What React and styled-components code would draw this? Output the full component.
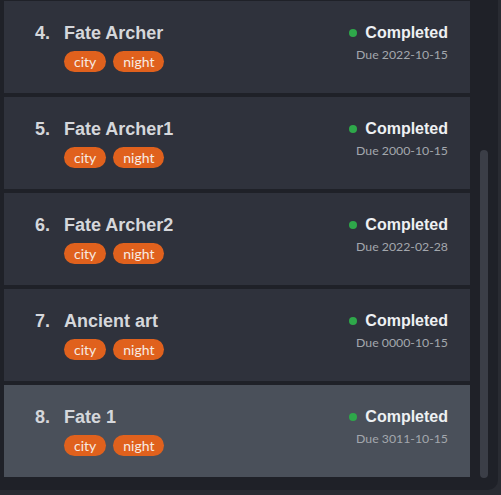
import React from "react";
import styled, { createGlobalStyle } from "styled-components";

const tasks = [
  { id: 4, title: "Fate Archer", tags: ["city", "night"], due: "2022-10-15" },
  { id: 5, title: "Fate Archer1", tags: ["city", "night"], due: "2000-10-15" },
  { id: 6, title: "Fate Archer2", tags: ["city", "night"], due: "2022-02-28" },
  { id: 7, title: "Ancient art", tags: ["city", "night"], due: "0000-10-15" },
  { id: 8, title: "Fate 1", tags: ["city", "night"], due: "3011-10-15", active: true },
];

const App = () => {
  return (
    <>
      <GlobalStyle />
      <Panel>
        <List>
          {tasks.map((t) => (
            <Card key={t.id} $active={t.active}>
              <Left>
                <TitleRow>
                  <Num>{t.id}.</Num>
                  <Title>{t.title}</Title>
                </TitleRow>
                <Tags>
                  {t.tags.map((tag) => (
                    <Tag key={tag}>{tag}</Tag>
                  ))}
                </Tags>
              </Left>
              <Right>
                <Status>
                  <Dot />
                  Completed
                </Status>
                <Due>Due {t.due}</Due>
              </Right>
            </Card>
          ))}
        </List>
        <Track>
          <Thumb />
        </Track>
      </Panel>
    </>
  );
};
export default App;

const GlobalStyle = createGlobalStyle`
  html, body {
    margin: 0;
    background: #292b32;
    height: 495px;
    overflow: hidden;
  }
`;

const Panel = styled.div`
  width: 498px;
  height: 490px;
  box-sizing: border-box;
  background: #1f2128;
  border-bottom-right-radius: 10px;
  display: flex;
  gap: 10px;
  padding: 1px 10px 13px 4px;
  font-family: "Liberation Sans", Arial, sans-serif;
`;

const List = styled.div`
  width: 466px;
  display: flex;
  flex-direction: column;
  gap: 4px;
`;

const Card = styled.div`
  height: 92px;
  box-sizing: border-box;
  background: ${(p) => (p.$active ? "#4a505a" : "#2f323c")};
  display: flex;
  justify-content: space-between;
  align-items: flex-start;
  padding: 21px 22px 0 31px;
`;

const Left = styled.div`
  display: flex;
  flex-direction: column;
`;

const TitleRow = styled.div`
  display: flex;
  line-height: 22px;
  font-size: 18px;
  font-weight: bold;
  color: #d5d7db;
  margin-bottom: 7px;
`;

const Num = styled.span`
  width: 29px;
`;

const Title = styled.span``;

const Tags = styled.div`
  display: flex;
  gap: 7px;
  padding-left: 29px;
`;

const Tag = styled.span`
  height: 21px;
  line-height: 21px;
  padding: 0 10px;
  border-radius: 11px;
  background: #e0611d;
  color: #f7ebe3;
  font-family: Lato, "Liberation Sans", sans-serif;
  font-size: 14px;
`;

const Right = styled.div`
  display: flex;
  flex-direction: column;
  align-items: flex-end;
  padding-top: 1px;
`;

const Status = styled.div`
  display: flex;
  align-items: center;
  gap: 8px;
  font-size: 16px;
  line-height: 20px;
  font-weight: bold;
  color: #eef0f2;
`;

const Dot = styled.span`
  width: 8px;
  height: 8px;
  border-radius: 50%;
  background: #2ea84a;
`;

const Due = styled.div`
  margin-top: 4px;
  font-family: Lato, "Liberation Sans", sans-serif;
  font-size: 12.3px;
  line-height: 16px;
  color: #a3a7ad;
`;

const Track = styled.div`
  width: 8px;
`;

const Thumb = styled.div`
  margin-top: 149px;
  height: 328px;
  border-radius: 4px;
  background: #3b3e47;
`;
